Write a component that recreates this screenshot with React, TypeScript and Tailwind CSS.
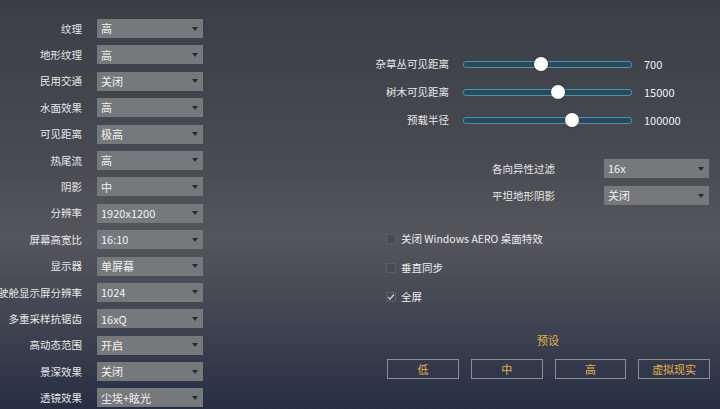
const leftRows: [string, string][] = [
  ['纹理', '高'],
  ['地形纹理', '高'],
  ['民用交通', '关闭'],
  ['水面效果', '高'],
  ['可见距离', '极高'],
  ['热尾流', '高'],
  ['阴影', '中'],
  ['分辨率', '1920x1200'],
  ['屏幕高宽比', '16:10'],
  ['显示器', '单屏幕'],
  ['驾驶舱显示屏分辨率', '1024'],
  ['多重采样抗锯齿', '16xQ'],
  ['高动态范围', '开启'],
  ['景深效果', '关闭'],
  ['透镜效果', '尘埃+眩光'],
]

const sliders = [
  { label: '杂草丛可见距离', value: '700', pos: 0.46 },
  { label: '树木可见距离', value: '15000', pos: 0.56 },
  { label: '预载半径', value: '100000', pos: 0.645 },
]

const checks = [
  { label: '关闭 Windows AERO 桌面特效', on: false },
  { label: '垂直同步', on: false },
  { label: '全屏', on: true },
]

function Select({ value, width }: { value: string; width: string }) {
  return (
    <div className={`${width} flex h-[19px] items-center justify-between bg-[#76797c] pl-[4px] pr-[5px] text-[11px] text-[#f2f2f2]`}>
      <span>{value}</span>
      <svg width="6" height="4" viewBox="0 0 6 4">
        <path d="M0 0H6L3 4Z" fill="#2b2c2e" />
      </svg>
    </div>
  )
}

export default function App() {
  return (
    <div
      className="flex h-[409px] w-[720px] overflow-hidden bg-[linear-gradient(180deg,#3b3e46_0%,#474950_35%,#55565b_58%,#3f4351_80%,#272e43_100%)] text-[#e8e8e8]"
      style={{ fontFamily: '"Noto Sans CJK SC", "Noto Sans", sans-serif' }}
    >
      <div className="flex w-[203px] shrink-0 flex-col gap-[7.4px] pt-[19px]">
        {leftRows.map(([label, value]) => (
          <div key={label} className="flex h-[19px] items-center">
            <div className="flex w-[82px] shrink-0 justify-end whitespace-nowrap text-[10.5px]">{label}</div>
            <div className="ml-[15px]">
              <Select value={value} width="w-[106px]" />
            </div>
          </div>
        ))}
      </div>

      <div className="ml-[183px] flex w-[324px] shrink-0 flex-col">
        <div className="mt-[56px] flex flex-col gap-[12px]">
          {sliders.map((s) => (
            <div key={s.label} className="flex h-[16px] items-center">
              <div className="flex w-[63px] shrink-0 justify-end whitespace-nowrap text-[10.5px]">{s.label}</div>
              <div className="relative ml-[14px] h-[7px] w-[169px] shrink-0 rounded-[3px] border border-[#4594b3] bg-[#2c4959]">
                <div
                  className="absolute top-1/2 h-[14px] w-[14px] -translate-x-1/2 -translate-y-1/2 rounded-full bg-white shadow-[0_0_2px_rgba(0,0,0,0.4)]"
                  style={{ left: `${s.pos * 100}%` }}
                />
              </div>
              <div className="ml-[12px] text-[11px] text-[#f0f0f0]">{s.value}</div>
            </div>
          ))}
        </div>

        <div className="mt-[31px] flex flex-col gap-[8px]">
          {[
            ['各向异性过滤', '16x'],
            ['平坦地形阴影', '关闭'],
          ].map(([label, value]) => (
            <div key={label} className="flex h-[19px] items-center">
              <div className="flex w-[169px] shrink-0 justify-end whitespace-nowrap text-[10.5px]">{label}</div>
              <div className="ml-[49px]">
                <Select value={value} width="w-[105px]" />
              </div>
            </div>
          ))}
        </div>

        <div className="mt-[27px] flex flex-col gap-[15px]">
          {checks.map((c) => (
            <div key={c.label} className="flex h-[14px] items-center">
              <div className="flex h-[10px] w-[10px] items-center justify-center border border-[#5c5e65] bg-[#4a4c53]">
                {c.on && (
                  <svg width="8" height="8" viewBox="0 0 8 8">
                    <path d="M1 4.2L3 6.2L7 1.5" stroke="#d8d8d8" strokeWidth="1.2" fill="none" />
                  </svg>
                )}
              </div>
              <span className="ml-[5px] text-[10.5px] text-[#eeeeee]">{c.label}</span>
            </div>
          ))}
        </div>

        <div className="mt-[29px] flex h-[14px] items-center justify-center text-[11px] text-[#e2b04c]">预设</div>

        <div className="ml-[1px] mt-[12px] grid grid-cols-4 gap-[12px]">
          {['低', '中', '高', '虚拟现实'].map((b) => (
            <div
              key={b}
              className="flex h-[20px] items-center justify-center border border-[#8d8e92] text-[11px] text-[#e2b04c]"
            >
              {b}
            </div>
          ))}
        </div>
      </div>
    </div>
  )
}
